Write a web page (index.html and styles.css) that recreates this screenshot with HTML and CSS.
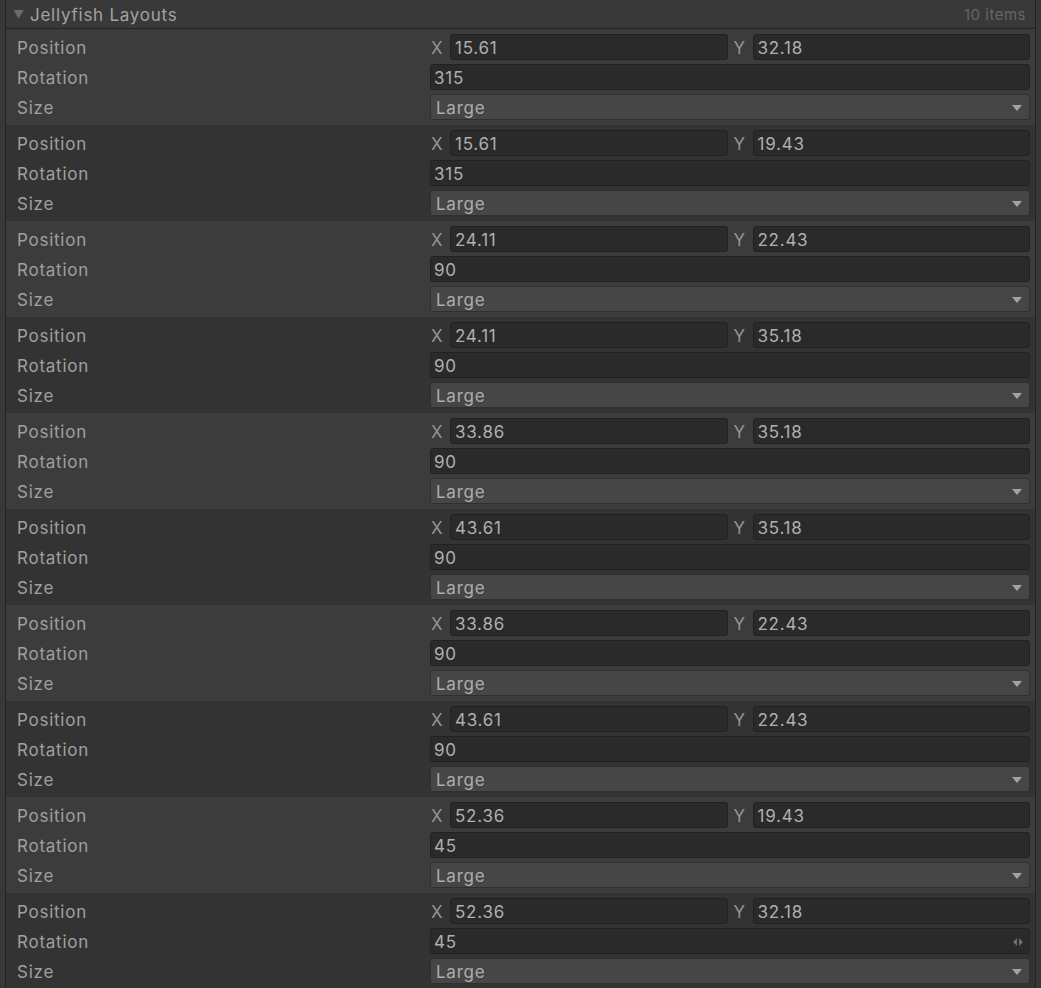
FILE: index.html
```html
<!DOCTYPE html>
<html>
<head>
<meta charset="utf-8">
<link rel="stylesheet" href="styles.css">
</head>
<body>
<div class="list">
  <div class="header">
    <span class="fold">&#9660;</span>
    <span class="title">Jellyfish Layouts</span>
    <span class="count">10 items</span>
  </div>

  <div class="item odd">
    <div class="label">Position</div>
    <div class="vec"><div class="half"><span class="axis">X</span><div class="field">15.61</div></div><div class="half"><span class="axis">Y</span><div class="field">32.18</div></div></div>
    <div class="label">Rotation</div>
    <div class="field">315</div>
    <div class="label">Size</div>
    <div class="drop">Large<span class="arrow"></span></div>
  </div>

  <div class="item even">
    <div class="label">Position</div>
    <div class="vec"><div class="half"><span class="axis">X</span><div class="field">15.61</div></div><div class="half"><span class="axis">Y</span><div class="field">19.43</div></div></div>
    <div class="label">Rotation</div>
    <div class="field">315</div>
    <div class="label">Size</div>
    <div class="drop">Large<span class="arrow"></span></div>
  </div>

  <div class="item odd">
    <div class="label">Position</div>
    <div class="vec"><div class="half"><span class="axis">X</span><div class="field">24.11</div></div><div class="half"><span class="axis">Y</span><div class="field">22.43</div></div></div>
    <div class="label">Rotation</div>
    <div class="field">90</div>
    <div class="label">Size</div>
    <div class="drop">Large<span class="arrow"></span></div>
  </div>

  <div class="item even">
    <div class="label">Position</div>
    <div class="vec"><div class="half"><span class="axis">X</span><div class="field">24.11</div></div><div class="half"><span class="axis">Y</span><div class="field">35.18</div></div></div>
    <div class="label">Rotation</div>
    <div class="field">90</div>
    <div class="label">Size</div>
    <div class="drop">Large<span class="arrow"></span></div>
  </div>

  <div class="item odd">
    <div class="label">Position</div>
    <div class="vec"><div class="half"><span class="axis">X</span><div class="field">33.86</div></div><div class="half"><span class="axis">Y</span><div class="field">35.18</div></div></div>
    <div class="label">Rotation</div>
    <div class="field">90</div>
    <div class="label">Size</div>
    <div class="drop">Large<span class="arrow"></span></div>
  </div>

  <div class="item even">
    <div class="label">Position</div>
    <div class="vec"><div class="half"><span class="axis">X</span><div class="field">43.61</div></div><div class="half"><span class="axis">Y</span><div class="field">35.18</div></div></div>
    <div class="label">Rotation</div>
    <div class="field">90</div>
    <div class="label">Size</div>
    <div class="drop">Large<span class="arrow"></span></div>
  </div>

  <div class="item odd">
    <div class="label">Position</div>
    <div class="vec"><div class="half"><span class="axis">X</span><div class="field">33.86</div></div><div class="half"><span class="axis">Y</span><div class="field">22.43</div></div></div>
    <div class="label">Rotation</div>
    <div class="field">90</div>
    <div class="label">Size</div>
    <div class="drop">Large<span class="arrow"></span></div>
  </div>

  <div class="item even">
    <div class="label">Position</div>
    <div class="vec"><div class="half"><span class="axis">X</span><div class="field">43.61</div></div><div class="half"><span class="axis">Y</span><div class="field">22.43</div></div></div>
    <div class="label">Rotation</div>
    <div class="field">90</div>
    <div class="label">Size</div>
    <div class="drop">Large<span class="arrow"></span></div>
  </div>

  <div class="item odd">
    <div class="label">Position</div>
    <div class="vec"><div class="half"><span class="axis">X</span><div class="field">52.36</div></div><div class="half"><span class="axis">Y</span><div class="field">19.43</div></div></div>
    <div class="label">Rotation</div>
    <div class="field">45</div>
    <div class="label">Size</div>
    <div class="drop">Large<span class="arrow"></span></div>
  </div>

  <div class="item even">
    <div class="label">Position</div>
    <div class="vec"><div class="half"><span class="axis">X</span><div class="field">52.36</div></div><div class="half"><span class="axis">Y</span><div class="field">32.18</div></div></div>
    <div class="label">Rotation</div>
    <div class="field slider">45<svg class="drag" width="10" height="10" viewBox="0 0 10 10"><path d="M4 1 L0 5 L4 9 Z M6 1 L10 5 L6 9 Z" fill="#6e6e6e"/></svg></div>
    <div class="label">Size</div>
    <div class="drop">Large<span class="arrow"></span></div>
  </div>
</div>
</body>
</html>
```

FILE: styles.css
```css
html, body {
  margin: 0;
  padding: 0;
  background: #383838;
  height: 100%;
}

body {
  font-family: Inter, "Noto Sans", sans-serif;
  font-size: 17px;
  letter-spacing: 0.75px;
  color: #a8a8a8;
  overflow: hidden;
}

.list {
  margin: 0 5px;
  border-left: 1px solid #232323;
  border-right: 1px solid #232323;
  min-height: 100%;
}

.header {
  height: 28px;
  border-bottom: 1px solid #232323;
  display: flex;
  align-items: center;
  padding: 1px 9px 0 7px;
  box-sizing: border-box;
  height: 29px;
  background: #393939;
}

.fold {
  font-size: 11px;
  color: #6c6c6c;
  width: 17px;
  margin-top: -1px;
  letter-spacing: 0;
}

.title {
  color: #a2a2a2;
  flex: 1;
}

.count {
  color: #666666;
  font-size: 15px;
  letter-spacing: 0.5px;
}

.item {
  display: grid;
  grid-template-columns: 413px 1fr;
  grid-auto-rows: 26px;
  row-gap: 4px;
  padding: 5px 5px 5px 11px;
  height: 96px;
  box-sizing: border-box;
}

.item.odd { background: #3c3c3c; }
.item.even { background: #333333; }

.label {
  display: flex;
  align-items: center;
  padding-top: 1px;
  color: #a0a0a0;
}

.vec {
  display: grid;
  grid-template-columns: 1fr 1fr;
  column-gap: 5px;
}

.half {
  display: flex;
  align-items: stretch;
}

.axis {
  width: 20px;
  padding-left: 1px;
  padding-top: 1px;
  box-sizing: border-box;
  display: flex;
  align-items: center;
  color: #949494;
}

.field {
  flex: 1;
  display: flex;
  align-items: center;
  background: #2a2a2a;
  border: 1px solid #212121;
  border-radius: 3px;
  padding: 1px 3px 0 3px;
  color: #b0b0b0;
  box-sizing: border-box;
  min-width: 0;
  position: relative;
}

.half .field {
  padding-left: 4px;
}

.drag {
  position: absolute;
  right: 6px;
  top: 8px;
}

.drop {
  display: flex;
  align-items: center;
  background: #464646;
  border: 1px solid #303030;
  border-radius: 3px;
  padding: 1px 6px 0 5px;
  color: #acacac;
  box-sizing: border-box;
  position: relative;
}

.arrow {
  position: absolute;
  right: 7px;
  top: 10px;
  width: 0;
  height: 0;
  border-left: 5px solid transparent;
  border-right: 5px solid transparent;
  border-top: 6px solid #a2a2a2;
}
```
